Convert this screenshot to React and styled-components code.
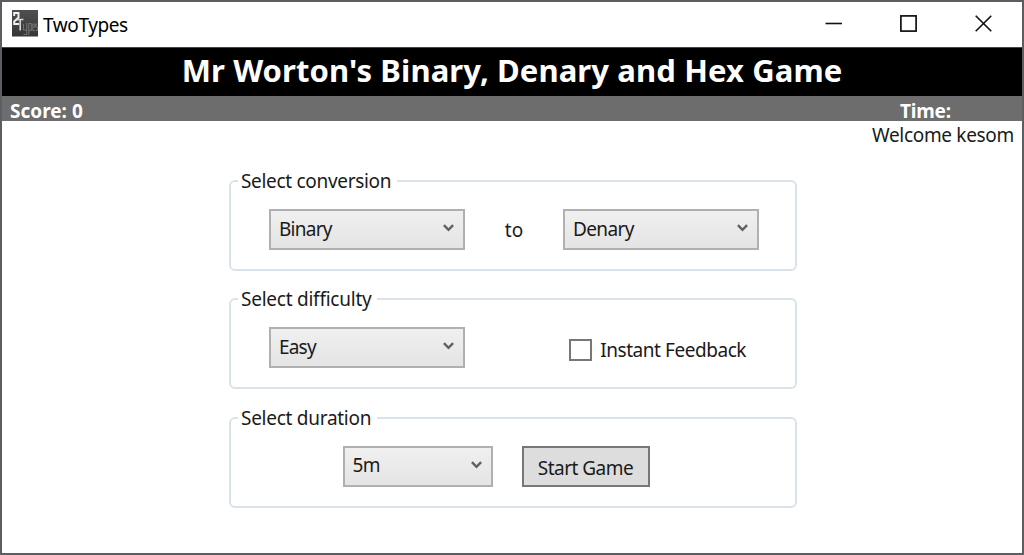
import React from "react";
import styled, { createGlobalStyle } from "styled-components";

const GlobalStyle = createGlobalStyle`
  * { box-sizing: border-box; }
  body { margin: 0; background: #fff; }
`;

const Window = styled.div`
  width: 1024px;
  height: 555px;
  display: flex;
  flex-direction: column;
  border: 2px solid #5b5e62;
  background: #fff;
  color: #1a1a1a;
  font-family: "Noto Sans", "Open Sans", sans-serif;
  font-size: 19px;
  line-height: 26px;
  overflow: hidden;
`;

const Label = styled.span`
  display: block;
  white-space: nowrap;
  letter-spacing: ${(p) => p.$spacing || 0}px;
`;

const TitleBar = styled.header`
  height: 45px;
  flex: none;
  display: flex;
  align-items: flex-start;
  padding: 8px 30px 0 9px;
`;

const AppName = styled(Label)`
  margin: 2px 0 0 5px;
  flex: 1;
  color: #000;
`;

const Controls = styled.div`
  display: flex;
  gap: 58px;
  padding-top: 5px;
`;

const Banner = styled.h1`
  height: 49px;
  flex: none;
  margin: 0;
  display: flex;
  justify-content: center;
  border-top: 1px solid #444;
  background: #000;
  color: #fff;
  font-size: 31px;
  line-height: 45px;
  font-weight: 700;
`;

const StatusBar = styled.div`
  height: 25px;
  flex: none;
  display: flex;
  justify-content: space-between;
  padding: 5px 71px 0 8px;
  background: #6d6d6d;
  color: #fff;
  font-weight: 700;
  line-height: 20px;
`;

const Welcome = styled.div`
  display: flex;
  justify-content: flex-end;
  height: 26px;
  flex: none;
  padding: 3px 8px 0 0;
  line-height: 22px;
`;

const Groups = styled.main`
  width: 568px;
  margin: 21px 0 0 227px;
  display: flex;
  flex-direction: column;
  gap: 15.4px;
`;

const Group = styled.fieldset`
  height: 103px;
  min-width: 0;
  margin: 0;
  padding: 15px 36px 0 38px;
  border: 2px solid #dae3e9;
  border-radius: 6px;
`;

const Legend = styled.legend`
  height: 26px;
  margin-left: -31px;
  padding: 0 6px 0 3px;
`;

const Fields = styled.div`
  display: flex;
  align-items: flex-start;
  justify-content: ${(p) => (p.$centered ? "center" : "space-between")};
  gap: ${(p) => (p.$centered ? "29px" : "0")};
  padding-right: ${(p) => (p.$centered ? "36px" : "0")};
`;

const Combo = styled.button`
  width: ${(p) => p.$width}px;
  height: 41px;
  display: flex;
  align-items: center;
  justify-content: space-between;
  padding: 0 9px 2px 8px;
  border: 2px solid #b0b0b0;
  border-radius: 0;
  background: linear-gradient(#f0f0f0, #e4e4e4);
  color: #1a1a1a;
  font: inherit;
`;

const StartButton = styled.button`
  width: 128px;
  height: 41px;
  display: flex;
  align-items: center;
  justify-content: center;
  padding: 3px 0 0;
  border: 2px solid #777;
  border-radius: 0;
  background: #ddd;
  color: #1a1a1a;
  font: inherit;
`;

const Joiner = styled.div`
  padding-top: 8px;
`;

const Check = styled.label`
  display: flex;
  align-items: center;
  gap: 8px;
  padding: 10px 13px 0 0;
`;

const Box = styled.span`
  width: 23px;
  height: 22px;
  border: 2px solid #777;
  background: #fff;
`;

const Chevron = () => (
  <svg width="11" height="9" viewBox="0 0 11 9">
    <path d="M0.9 1.2 L5.5 5.8 L10.1 1.2" fill="none" stroke="#606060" strokeWidth="2.4" />
  </svg>
);

const AppIcon = () => (
  <svg width="27" height="27" viewBox="0 0 27 27">
    <defs>
      <linearGradient id="plate" x1="0" y1="0" x2="0" y2="1">
        <stop offset="0" stopColor="#505050" />
        <stop offset="1" stopColor="#363636" />
      </linearGradient>
    </defs>
    <rect x="1" y="0" width="26" height="26.5" fill="url(#plate)" />
    <path d="M3.2 6 V3 H7.5 V7.5 L3.2 11.5 V14 H8" fill="none" stroke="#f2f2f2" strokeWidth="1.9" />
    <path d="M7 10.5 V9.5 H12.5 M9.2 10 V20.5" fill="none" stroke="#d6d6d6" strokeWidth="1.6" />
    <path
      d="M12.5 14 V20 H15.8 M15.8 13 V24.5 H12.5 M17.8 25 V13.5 H20.3 V20.5 H18 M22 17 H24 V14 H21.8 V20.5 H24 M26.5 14 H25 V17 H26.4 V20.5 H25"
      fill="none"
      stroke="#808080"
      strokeWidth="0.8"
    />
  </svg>
);

function Select({ value, width = 196, spacing }) {
  return (
    <Combo $width={width}>
      <Label $spacing={spacing}>{value}</Label>
      <Chevron />
    </Combo>
  );
}

export default function App() {
  return (
    <>
      <GlobalStyle />
      <Window>
        <TitleBar>
          <AppIcon />
          <AppName $spacing={-0.4}>TwoTypes</AppName>
          <Controls>
            <svg width="17" height="17" viewBox="0 0 17 17">
              <path d="M0.5 8.5 H17" stroke="#111" strokeWidth="1.6" />
            </svg>
            <svg width="17" height="17" viewBox="0 0 17 17">
              <rect x="0.9" y="0.9" width="15.2" height="15.2" fill="none" stroke="#111" strokeWidth="1.7" />
            </svg>
            <svg width="17" height="17" viewBox="0 0 17 17">
              <path d="M0.7 0.7 L16.3 16.3 M16.3 0.7 L0.7 16.3" stroke="#111" strokeWidth="1.6" />
            </svg>
          </Controls>
        </TitleBar>
        <Banner>
          <Label $spacing={0.11}>Mr Worton's Binary, Denary and Hex Game</Label>
        </Banner>
        <StatusBar>
          <Label>Score: 0</Label>
          <Label $spacing={-0.15}>Time:</Label>
        </StatusBar>
        <Welcome>
          <Label $spacing={-0.32}>Welcome kesom</Label>
        </Welcome>
        <Groups>
          <Group>
            <Legend>
              <Label $spacing={-0.31}>Select conversion</Label>
            </Legend>
            <Fields>
              <Select value="Binary" spacing={-0.75} />
              <Joiner>
                <Label>to</Label>
              </Joiner>
              <Select value="Denary" spacing={-0.6} />
            </Fields>
          </Group>
          <Group>
            <Legend>
              <Label $spacing={-0.24}>Select difficulty</Label>
            </Legend>
            <Fields>
              <Select value="Easy" spacing={-0.8} />
              <Check>
                <Box />
                <Label $spacing={-0.45}>Instant Feedback</Label>
              </Check>
            </Fields>
          </Group>
          <Group>
            <Legend>
              <Label $spacing={-0.27}>Select duration</Label>
            </Legend>
            <Fields $centered>
              <Select value="5m" width={150} spacing={-0.5} />
              <StartButton>
                <Label $spacing={-0.52}>Start Game</Label>
              </StartButton>
            </Fields>
          </Group>
        </Groups>
      </Window>
    </>
  );
}
